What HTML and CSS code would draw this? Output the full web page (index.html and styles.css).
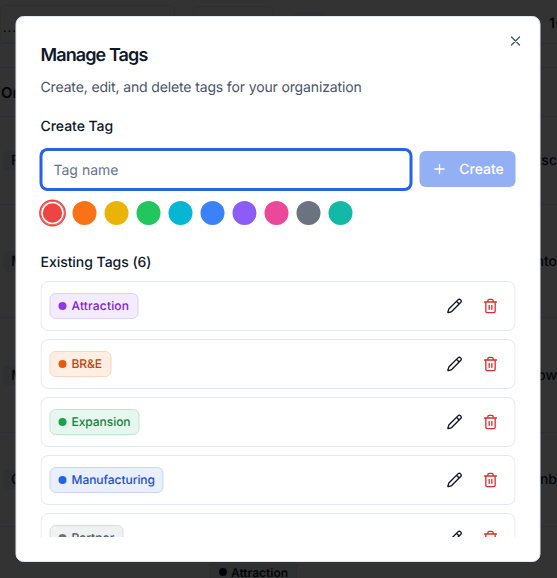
FILE: index.html
```html
<!DOCTYPE html>
<html lang="en">
<head>
<meta charset="utf-8">
<title>Manage Tags</title>
<link rel="stylesheet" href="styles.css">
</head>
<body>
<main class="app">
  <div class="toolbar">
    <div class="search">...</div>
    <div class="filter"></div>
    <div class="chip"></div>
    <span class="count">1-</span>
  </div>
  <div class="band"></div>
  <div class="row row-head"><span>Or</span></div>
  <div class="row row-a"><span class="cell">F</span><span class="end">ksc</span></div>
  <div class="row row-b"><span class="cell">M</span><span class="end">nto</span></div>
  <div class="row row-c"><span class="cell">M</span><span class="end">ow</span></div>
  <div class="row row-d"><span class="cell">C</span><span class="end">enb</span></div>
  <div class="row row-e"><span class="bg-tag"><i></i>Attraction</span></div>
</main>
<div class="overlay"></div>
<section class="dialog">
  <button class="close" aria-label="Close">
    <svg viewBox="0 0 24 24" width="16" height="16"><path d="M18 6 6 18M6 6l12 12"/></svg>
  </button>
  <h1>Manage Tags</h1>
  <p class="desc">Create, edit, and delete tags for your organization</p>
  <h2 class="create-label">Create Tag</h2>
  <div class="create-row">
    <input class="name" placeholder="Tag name">
    <button class="create">
      <svg viewBox="0 0 24 24" width="16" height="16"><path d="M5 12h14M12 5v14"/></svg>
      Create
    </button>
  </div>
  <div class="swatches">
    <span class="swatch selected red"></span>
    <span class="swatch orange"></span>
    <span class="swatch yellow"></span>
    <span class="swatch green"></span>
    <span class="swatch cyan"></span>
    <span class="swatch blue"></span>
    <span class="swatch violet"></span>
    <span class="swatch pink"></span>
    <span class="swatch gray"></span>
    <span class="swatch teal"></span>
  </div>
  <h2 class="existing">Existing Tags (6)</h2>
  <div class="list">
    <div class="item"><span class="tag t-purple"><i></i>Attraction</span>
      <span class="actions">
        <svg class="edit" viewBox="0 0 24 24" width="16" height="16"><path d="M21.17 6.81a2.82 2.82 0 0 0-3.99-3.99L3.84 16.17a2 2 0 0 0-.5.83l-1.32 4.35a.5.5 0 0 0 .62.62l4.35-1.32a2 2 0 0 0 .83-.5zM15 5l4 4"/></svg>
        <svg class="trash" viewBox="0 0 24 24" width="16" height="16"><path d="M3 6h18M19 6v14a2 2 0 0 1-2 2H7a2 2 0 0 1-2-2V6M8 6V4a2 2 0 0 1 2-2h4a2 2 0 0 1 2 2v2M10 11v6M14 11v6"/></svg>
      </span></div>
    <div class="item"><span class="tag t-orange"><i></i>BR&amp;E</span>
      <span class="actions">
        <svg class="edit" viewBox="0 0 24 24" width="16" height="16"><path d="M21.17 6.81a2.82 2.82 0 0 0-3.99-3.99L3.84 16.17a2 2 0 0 0-.5.83l-1.32 4.35a.5.5 0 0 0 .62.62l4.35-1.32a2 2 0 0 0 .83-.5zM15 5l4 4"/></svg>
        <svg class="trash" viewBox="0 0 24 24" width="16" height="16"><path d="M3 6h18M19 6v14a2 2 0 0 1-2 2H7a2 2 0 0 1-2-2V6M8 6V4a2 2 0 0 1 2-2h4a2 2 0 0 1 2 2v2M10 11v6M14 11v6"/></svg>
      </span></div>
    <div class="item"><span class="tag t-green"><i></i>Expansion</span>
      <span class="actions">
        <svg class="edit" viewBox="0 0 24 24" width="16" height="16"><path d="M21.17 6.81a2.82 2.82 0 0 0-3.99-3.99L3.84 16.17a2 2 0 0 0-.5.83l-1.32 4.35a.5.5 0 0 0 .62.62l4.35-1.32a2 2 0 0 0 .83-.5zM15 5l4 4"/></svg>
        <svg class="trash" viewBox="0 0 24 24" width="16" height="16"><path d="M3 6h18M19 6v14a2 2 0 0 1-2 2H7a2 2 0 0 1-2-2V6M8 6V4a2 2 0 0 1 2-2h4a2 2 0 0 1 2 2v2M10 11v6M14 11v6"/></svg>
      </span></div>
    <div class="item"><span class="tag t-blue"><i></i>Manufacturing</span>
      <span class="actions">
        <svg class="edit" viewBox="0 0 24 24" width="16" height="16"><path d="M21.17 6.81a2.82 2.82 0 0 0-3.99-3.99L3.84 16.17a2 2 0 0 0-.5.83l-1.32 4.35a.5.5 0 0 0 .62.62l4.35-1.32a2 2 0 0 0 .83-.5zM15 5l4 4"/></svg>
        <svg class="trash" viewBox="0 0 24 24" width="16" height="16"><path d="M3 6h18M19 6v14a2 2 0 0 1-2 2H7a2 2 0 0 1-2-2V6M8 6V4a2 2 0 0 1 2-2h4a2 2 0 0 1 2 2v2M10 11v6M14 11v6"/></svg>
      </span></div>
    <div class="item"><span class="tag t-gray"><i></i>Partner</span>
      <span class="actions">
        <svg class="edit" viewBox="0 0 24 24" width="16" height="16"><path d="M21.17 6.81a2.82 2.82 0 0 0-3.99-3.99L3.84 16.17a2 2 0 0 0-.5.83l-1.32 4.35a.5.5 0 0 0 .62.62l4.35-1.32a2 2 0 0 0 .83-.5zM15 5l4 4"/></svg>
        <svg class="trash" viewBox="0 0 24 24" width="16" height="16"><path d="M3 6h18M19 6v14a2 2 0 0 1-2 2H7a2 2 0 0 1-2-2V6M8 6V4a2 2 0 0 1 2-2h4a2 2 0 0 1 2 2v2M10 11v6M14 11v6"/></svg>
      </span></div>
  </div>
</section>
</body>
</html>
```
FILE: styles.css
```css
* { box-sizing: border-box; }
html, body { margin: 0; height: 100%; overflow: hidden; }
body { font-family: Inter, "Liberation Sans", sans-serif; color: #0f172a; background: #fff; text-rendering: geometricPrecision; -webkit-font-smoothing: antialiased; }

.app { height: 578px; overflow: hidden; font-size: 14px; font-weight: 500; }
.toolbar { height: 44px; display: flex; align-items: flex-start; border-bottom: 1px solid #e2e8f0; position: relative; }
.search { width: 175px; height: 38px; margin-top: 5px; border: 1px solid #e2e8f0; border-radius: 6px; padding: 14px 0 0 2px; color: #0f172a; font-size: 12px; letter-spacing: 1px; }
.filter { width: 80px; height: 38px; margin: 6px 0 0 18px; border: 1px solid #e2e8f0; border-radius: 6px; }
.chip { width: 36px; height: 28px; margin: 12px 0 0 19px; background: #f1f5f9; border-radius: 8px; }
.count { position: absolute; left: 549px; top: 15px; font-weight: 600; white-space: nowrap; width: 8px; overflow: hidden; }
.band { height: 24px; border-bottom: 1px solid #e2e8f0; }
.row { display: flex; justify-content: space-between; align-items: center; padding-left: 3px; border-bottom: 1px solid #e2e8f0; font-size: 14px; }
.cell { background: #e9edf2; border-radius: 6px; padding: 2px 8px; margin-left: 0; }
.end { font-size: 14px; }
.row-head { height: 49px; padding-left: 1px; font-size: 15px; font-weight: 600; }
.row-a { height: 88px; }
.row-b { height: 113px; }
.row-c { height: 115px; }
.row-d { height: 94px; }
.row-e { height: 51px; padding-left: 209px; border-bottom: 0; align-items: flex-start; padding-top: 35px; }
.bg-tag { display: inline-flex; align-items: center; gap: 4px; font-size: 12px; font-weight: 600; height: 20px; padding: 0 8px 0 9px; background: #f1f5f9; border: 1px solid #e2e8f0; border-radius: 4px; }
.bg-tag i { width: 8px; height: 8px; border-radius: 50%; background: #0f172a; }

.overlay { position: fixed; inset: 0; background: rgba(0, 0, 0, .8); }

.dialog { position: fixed; left: calc(50% - .5px); top: 50%; transform: translate(-50%, -50%); width: 525px; height: 546px; background: #fff; border: 1px solid #e2e8f0; border-radius: 8px; padding: 24px; display: flex; flex-direction: column; overflow: hidden; }
.close { position: absolute; right: 16px; top: 16px; width: 16px; height: 16px; padding: 0; border: 0; background: none; display: flex; }
.close svg { fill: none; stroke: #475569; stroke-width: 2; stroke-linecap: round; stroke-linejoin: round; }

h1 { margin: 1px 0 0; font-size: 18px; line-height: 28px; font-weight: 600; letter-spacing: -.9px; color: #0f172a; }
.desc { margin: 8px 0 0; font-size: 14px; line-height: 20px; letter-spacing: -.14px; color: #475569; }
h2 { margin: 0; font-size: 14px; line-height: 20px; font-weight: 500; letter-spacing: -.04px; color: #0f172a; }
.create-label { margin-top: 19px; }
.create-row { display: flex; gap: 8px; margin-top: 11.5px; align-items: center; }
.name { flex: 1; min-width: 0; height: 41px; border: 2px solid #2563eb; box-shadow: 0 0 0 1px #2563eb; border-radius: 7px; padding: 2px 11px 0; font: 14px Inter, "Liberation Sans", sans-serif; text-rendering: geometricPrecision; color: #0f172a; outline: none; background: #fff; }
.name::placeholder { color: #64748b; opacity: 1; }
.create { flex: none; width: 96px; height: 36px; border: 0; border-radius: 6px; background: #93b0f5; color: #fff; font: 500 14px Inter, "Liberation Sans", sans-serif; letter-spacing: -.03px; text-rendering: geometricPrecision; display: flex; align-items: center; justify-content: center; gap: 12px; padding: 0; }
.create svg { fill: none; stroke: #fff; stroke-width: 2; stroke-linecap: round; }

.swatches { display: flex; gap: 8px; margin-top: 11.5px; }
.swatch { width: 24px; height: 24px; border-radius: 50%; }
.selected { box-shadow: 0 0 0 1.4px #ef4444, inset 0 0 0 .8px #ef4444, inset 0 0 0 2.3px #fff; }
.red { background: #ef4444; }
.orange { background: #f97316; }
.yellow { background: #eab308; }
.green { background: #22c55e; }
.cyan { background: #06b6d4; }
.blue { background: #3b82f6; }
.violet { background: #8b5cf6; }
.pink { background: #ec4899; }
.gray { background: #6b7280; }
.teal { background: #14b8a6; }

.existing { margin-top: 28px; }
.list { margin-top: 8px; display: flex; flex-direction: column; gap: 8px; overflow: hidden; flex: 1 1 0; min-height: 0; }
.item { flex: none; height: 50px; display: flex; align-items: center; justify-content: space-between; border: 1px solid #e2e8f0; border-radius: 8px; padding: 0 16px 0 8px; }
.tag { display: inline-flex; align-items: center; gap: 5px; height: 26px; padding: 0 8px 1px; border: 1px solid; border-radius: 6px; font-size: 12px; font-weight: 500; letter-spacing: -.05px; }
.tag i { width: 8px; height: 8px; border-radius: 50%; margin-top: 1px; background: currentColor; }
.t-purple { background: #f3ebfe; border-color: #e0cffb; color: #7e22ce; letter-spacing: .17px; }
.t-purple i { background: #9333ea; }
.t-orange { background: #feeee4; border-color: #fbd5bd; color: #c2410c; }
.t-orange i { background: #ea580c; }
.t-green { background: #e8f7ed; border-color: #bce8cb; color: #15803d; }
.t-green i { background: #16a34a; }
.t-blue { background: #e9effd; border-color: #c8d7f9; color: #1d4ed8; }
.t-blue i { background: #2563eb; }
.t-gray { background: #f0f1f2; border-color: #d9dbde; color: #4b5563; letter-spacing: .1px; }
.t-gray i { background: #6b7280; }
.actions { display: flex; align-items: center; gap: 20px; padding-right: 0; }
.actions svg { fill: none; stroke-width: 2; stroke-linecap: round; stroke-linejoin: round; }
.edit { stroke: #0f172a; }
.trash { stroke: #e02d2d; }
```
